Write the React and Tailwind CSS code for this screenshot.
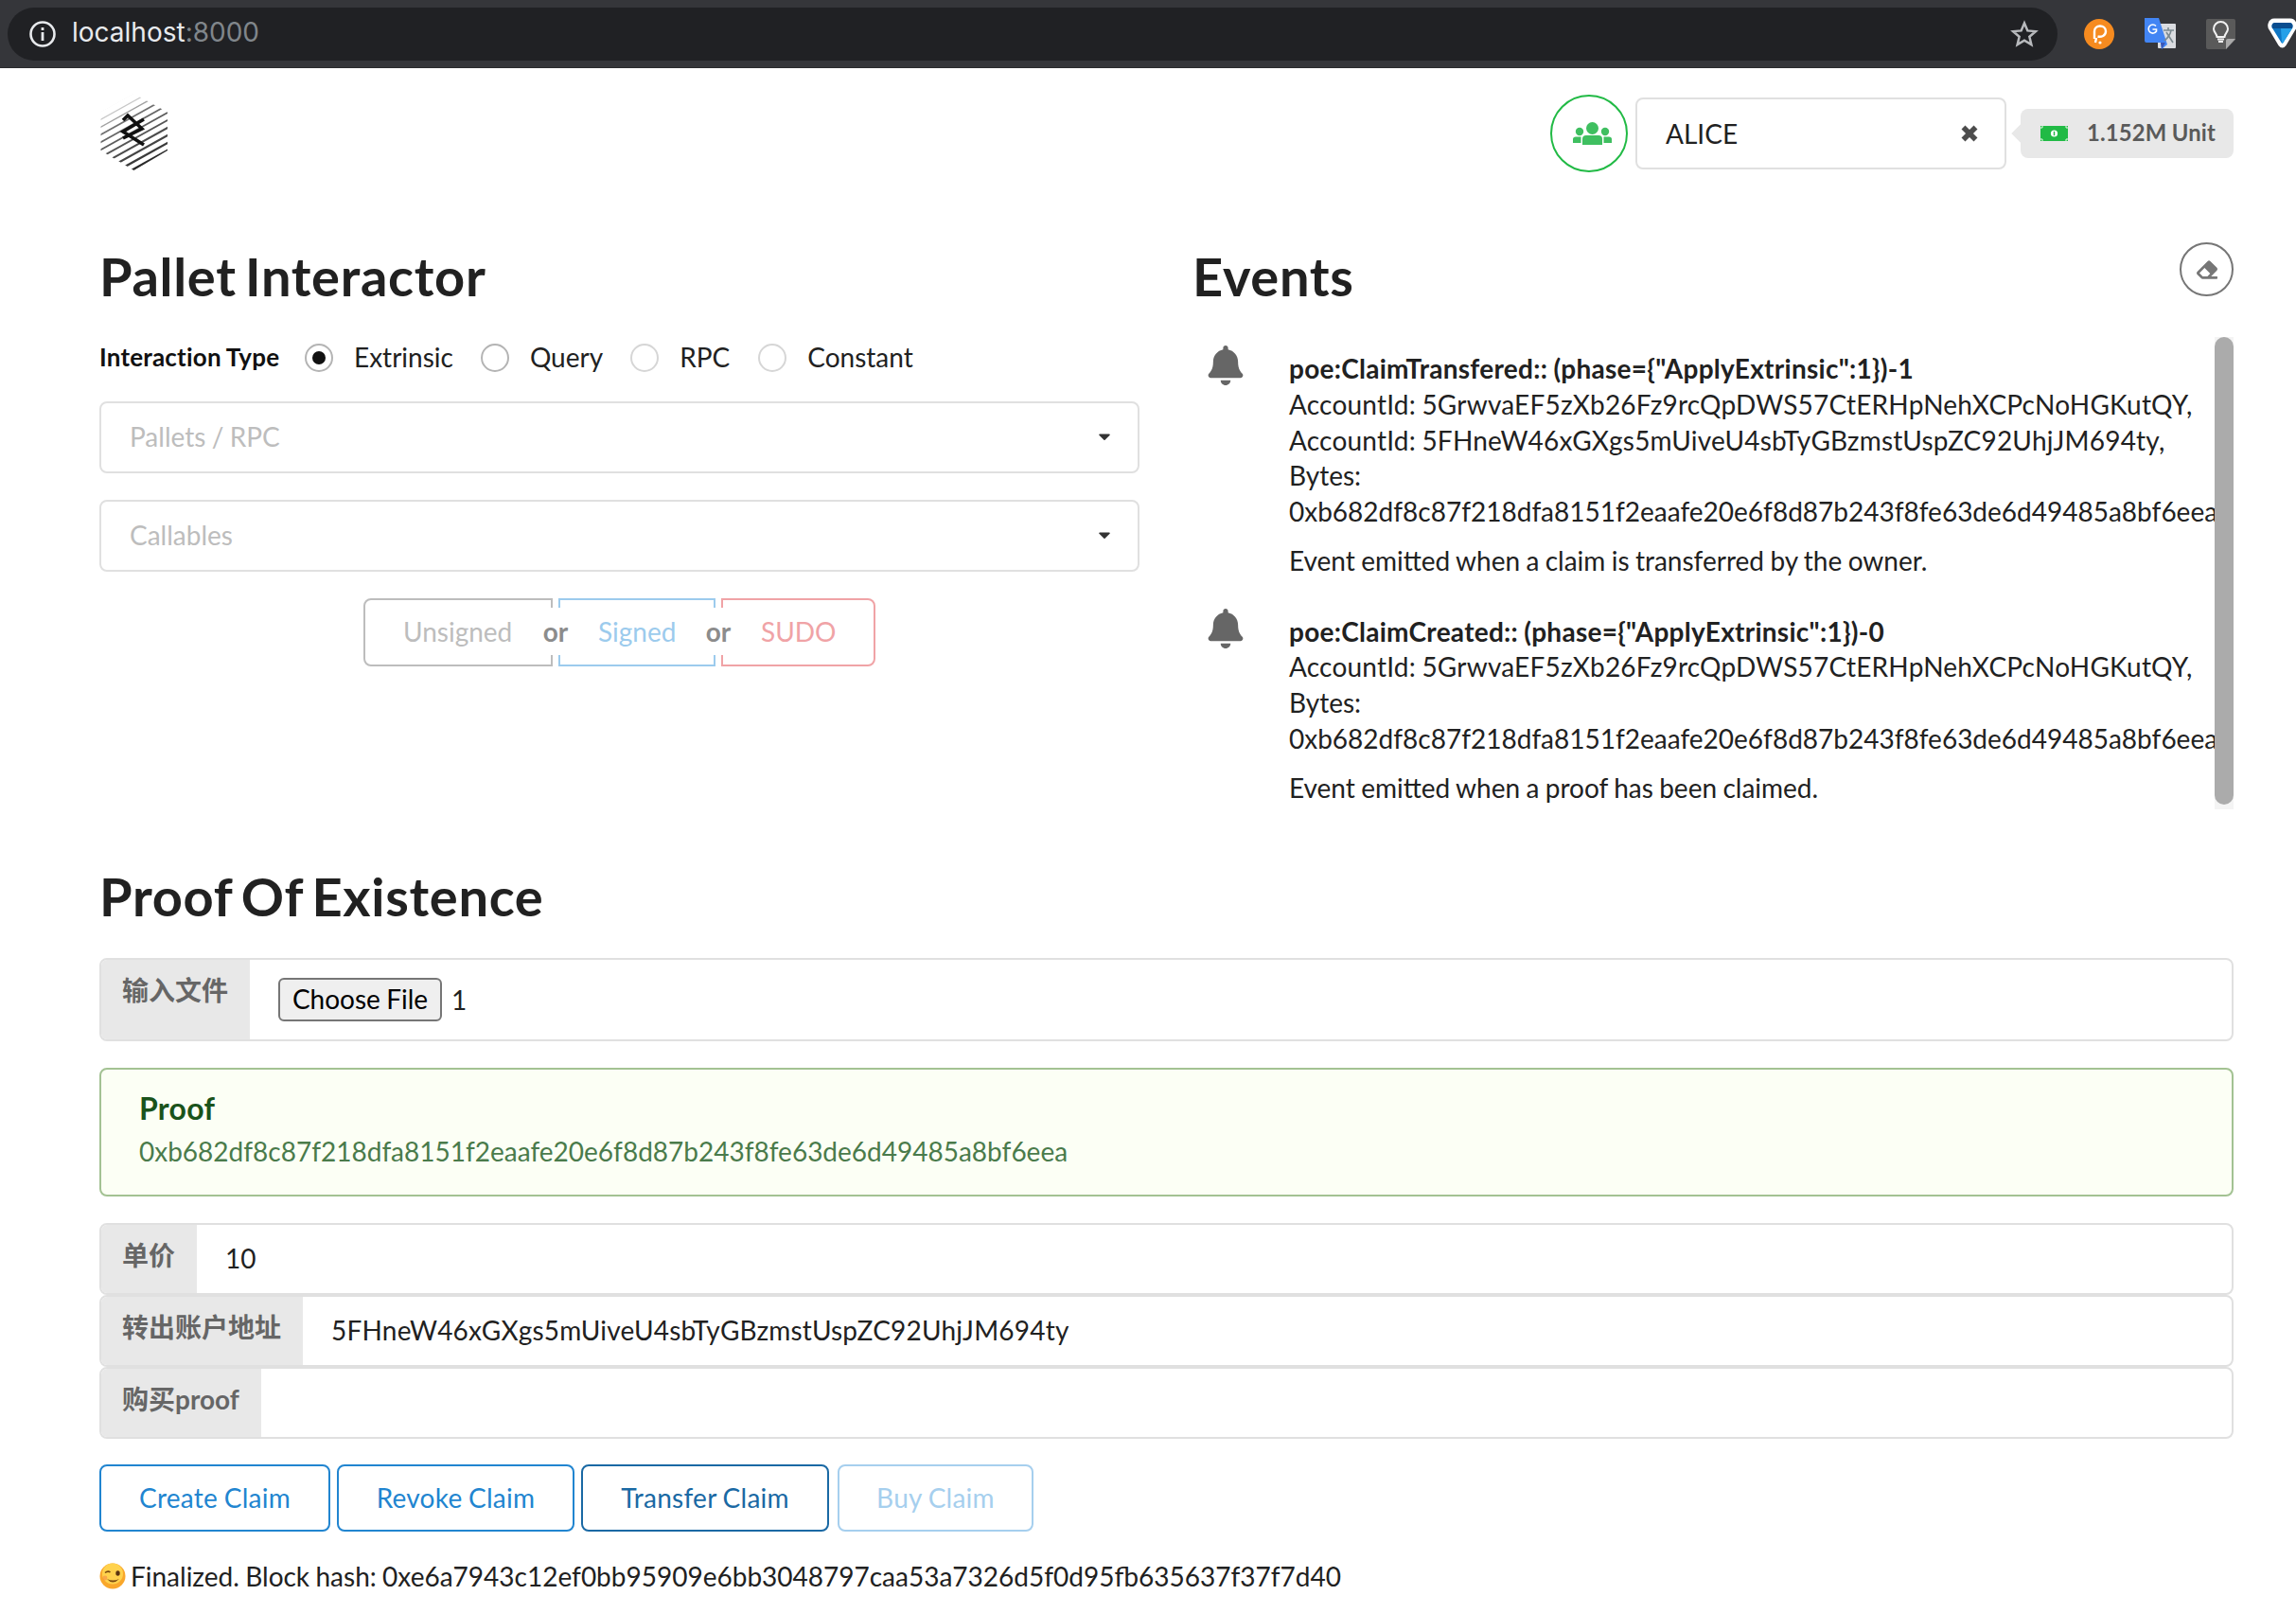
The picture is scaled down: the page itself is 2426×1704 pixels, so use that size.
import React from "react";
import { FaBell, FaEraser, FaCaretDown } from "react-icons/fa";

const logoLines = [
  [-0.5, "#dcdcdc", 1], [8, "#c8c8c8", 1.2], [16, "#a0a0a0", 1.4], [24, "#707070", 1.7], [32, "#666", 1.8], [40, "#5c5c5c", 1.8],
  [48, "#555", 1.9], [56, "#4c4c4c", 2], [64, "#444", 2.2], [72, "#3a3a3a", 2.4], [80, "#2a2a2a", 2.7], [88, "#222", 3],
];

function Logo() {
  return (
    <svg width="72" height="82" viewBox="0 0 72 82" className="ml-px -mt-[2px]">
      <defs>
        <clipPath id="hex">
          <polygon points="35.5,0 71,19.5 71,60 35.5,81 0.5,60 0.5,19.5" />
        </clipPath>
      </defs>
      <g clipPath="url(#hex)">
        {logoLines.map(([y, c, w], i) => (
          <line key={i} x1="-10" y1={y + 25} x2="80" y2={y - 25} stroke={c} strokeWidth={w} />
        ))}
      </g>
      <path d="M24 28 L29 23 L44 37 L24 47 M46 27 L24 40 L46 54" fill="none" stroke="#111" strokeWidth="3.6" />
    </svg>
  );
}

function Chrome() {
  return (
    <div className="h-[72px] bg-[#35363a] border-b border-[#2a2b2e] flex items-center pl-[8px] shrink-0 overflow-hidden">
      <div className="w-[2166px] h-[56px] rounded-full bg-[#202124] flex items-center pl-[22px] pr-[22px] shrink-0">
        <svg width="30" height="30" viewBox="0 0 30 30" className="shrink-0">
          <circle cx="15" cy="15" r="12.5" fill="none" stroke="#e8eaed" strokeWidth="2.6" />
          <rect x="13.6" y="13" width="2.8" height="9" fill="#e8eaed" />
          <rect x="13.6" y="8" width="2.8" height="3" fill="#e8eaed" />
        </svg>
        <div className="ml-[16px] pb-[3px] text-[28px] leading-none font-['Inter',sans-serif] text-[#e8eaed] whitespace-nowrap">
          localhost<span className="text-[#80868b]">:8000</span>
        </div>
        <svg width="30" height="30" viewBox="0 0 24 24" className="ml-auto -mr-[2px]">
          <path d="M12 2.8l2.7 6.3 6.8.6-5.2 4.5 1.6 6.7-5.9-3.6-5.9 3.6 1.6-6.7-5.2-4.5 6.8-.6z" fill="none" stroke="#b8babd" strokeWidth="2" />
        </svg>
      </div>
      <svg width="32" height="32" viewBox="0 0 32 32" className="ml-[28px] shrink-0">
        <circle cx="16" cy="16" r="16" fill="#f68b1f" />
        <path d="M11 21 L11 13 C11 5.5 23 6 23 13 C23 18 18 19.5 14.5 18.5 M12 25 L13 20" fill="none" stroke="#fff" strokeWidth="2.4" />
        <circle cx="17" cy="25" r="1.6" fill="#fff" />
      </svg>
      <svg width="33" height="34" viewBox="0 0 33 34" className="ml-[32px] shrink-0">
        <rect x="14" y="6" width="19" height="26" rx="1" fill="#dadce0" />
        <path d="M0 0 H15 L24 28 L18 33 L17 26 H2 Q0 26 0 24 Z" fill="#4285f4" />
        <path d="M17 26 H22 L18 33 Z" fill="#3a56b5" />
        <path d="M12 8.5 A4.5 4.5 0 1 0 12.5 14 L12.5 12 H8.5" fill="none" stroke="#fff" strokeWidth="1.6" />
        <path d="M20 13 H31 M25 10 V13 M21 24 Q27 19 28 13 M23 15 L30 26" fill="none" stroke="#7b8a90" strokeWidth="1.6" />
      </svg>
      <svg width="31" height="32" viewBox="0 0 31 32" className="ml-[32px] shrink-0">
        <path d="M2 0 H29 Q31 0 31 2 V22 L21 32 H2 Q0 32 0 30 V2 Q0 0 2 0 Z" fill="#5a5a5a" />
        <path d="M31 21 L21 32 V23 Q21 21 23 21 Z" fill="#a9a9a9" />
        <path d="M11.5 19 C11 15 8 14 8 10.5 A7.5 7.5 0 0 1 23 10.5 C23 14 20 15 19.5 19 Z M12 21.5 H19 M13 24 H18" fill="none" stroke="#f1f1f1" strokeWidth="2" />
      </svg>
      <svg width="31" height="33" viewBox="0 0 31 33" className="ml-[34px] shrink-0">
        <path d="M7 0.5 H24 Q29 0.5 30.5 6 Q31.5 10 29 13 L19.5 29 Q15.5 34 11.5 29 L2 13 Q-0.5 10 0.5 6 Q2 0.5 7 0.5 Z" fill="#fff" />
        <path d="M8 5 H23 Q26 5 26.5 8 Q27 10 25.5 11.5 L16.5 26 Q15.5 27.5 14.5 26 L5.5 11.5 Q4 10 4.5 8 Q5 5 8 5 Z" fill="#0f76c4" />
        <path d="M8 5 H23 Q26 5 26.5 8 L26 11 H5 L4.5 8 Q5 5 8 5 Z" fill="#0a4d8f" />
        <path d="M14 11 H26 L16.5 26 Q15.5 27.5 15 26 Z" fill="#26a0e8" />
      </svg>
    </div>
  );
}

function Header() {
  return (
    <div className="flex items-center justify-between pt-[28px] h-[110px]">
      <Logo />
      <div className="flex items-center">
        <div className="w-[82px] h-[82px] rounded-full border-2 border-[#21ba45] flex items-center justify-center">
          <svg width="41" height="24" viewBox="0 0 41 24" className="ml-[6px]" fill="#3fbf60">
            <circle cx="20.5" cy="6.5" r="6.5" />
            <circle cx="7" cy="10" r="4.2" />
            <circle cx="34" cy="10" r="4.2" />
            <path d="M10 24 V18 Q10 14 14 14 H27 Q31 14 31 18 V24 Z" />
            <path d="M0 22 V18 Q0 15.5 3 15.5 H8.5 V22 Z" />
            <path d="M41 22 V18 Q41 15.5 38 15.5 H32.5 V22 Z" />
          </svg>
        </div>
        <div className="ml-[8px] w-[392px] h-[76px] rounded-lg border-2 border-[#e0e0e0] flex items-center pl-[30px] pr-[27px] text-[28px] text-[#212121]">
          ALICE
          <svg width="20" height="20" viewBox="0 0 20 20" className="ml-auto">
            <path d="M3.5 3.5 L16.5 16.5 M16.5 3.5 L3.5 16.5" stroke="#4d4d4d" strokeWidth="5.6" />
          </svg>
        </div>
        <div className="relative ml-[15px] w-[225px] h-[52px] rounded-lg bg-[#e8e8e8] flex items-center pl-[21px] text-[23.8px] font-bold text-[#5a5a5a] whitespace-nowrap tracking-[0.2px]">
          <span className="absolute -left-[6px] top-[17px] w-[18px] h-[18px] rotate-45 bg-[#e8e8e8]" />
          <svg width="29" height="16" viewBox="0 0 29 16" className="shrink-0 relative">
            <rect width="29" height="16" fill="#21ba45" />
            <circle cx="14.5" cy="8" r="3.6" fill="#fff" />
            <rect x="13.8" y="5.8" width="1.4" height="4.4" fill="#21ba45" />
            <path d="M1 3V1h2M28 3V1h-2M1 13v2h2M28 13v2h-2" fill="none" stroke="#e8fbe8" strokeWidth="1" />
          </svg>
          <span className="ml-[20px]">1.152M Unit</span>
        </div>
      </div>
    </div>
  );
}

function Radio({ label, checked, stroke, mr }) {
  return (
    <div className={`flex items-center ${mr}`}>
      <span className={`w-[30px] h-[30px] rounded-full border-2 flex items-center justify-center ${stroke}`}>
        {checked && <span className="w-[14px] h-[14px] rounded-full bg-[#111]" />}
      </span>
      <span className="ml-[22px] text-[28px] text-[#212121] pb-[2px]">{label}</span>
    </div>
  );
}

function Select({ placeholder, mt }) {
  return (
    <div className={`h-[76px] rounded-lg border-2 border-[#e0e0e0] flex items-center pl-[30px] pr-[25px] text-[28px] text-[#bdbdbd] ${mt}`}>
      <span className="pb-[3px]">{placeholder}</span>
      <FaCaretDown className="ml-auto text-[#333] text-[20px] -mt-[2px]" />
    </div>
  );
}

const headingClass = "text-[56px] leading-[66px] font-bold text-[#212121] tracking-[0.7px] [word-spacing:-5px]";

function Interactor() {
  return (
    <div>
      <h1 className={`${headingClass} mt-[77px] pb-[2px]`}>Pallet Interactor</h1>
      <div className="flex items-center h-[40px] mt-[31px]">
        <span className="text-[26px] font-bold text-[#111] w-[217px] tracking-[0.2px] pb-[2px]">Interaction Type</span>
        <Radio label="Extrinsic" checked stroke="border-[#b4b4b4]" mr="mr-[29px]" />
        <Radio label="Query" stroke="border-[#b4b4b4]" mr="mr-[29px]" />
        <Radio label="RPC" stroke="border-[#d6d6d6]" mr="mr-[30px]" />
        <Radio label="Constant" stroke="border-[#d6d6d6]" mr="" />
      </div>
      <Select placeholder="Pallets / RPC" mt="mt-[26px]" />
      <Select placeholder="Callables" mt="mt-[28px]" />
      <div className="relative flex mt-[28px] ml-[279px] text-[28px] h-[72px]">
        <div className="w-[200px] border-2 border-[#bdbdbd] rounded-l-lg text-[#bdbdbd] flex items-center pl-[40px] pb-[3px]">Unsigned</div>
        <div className="ml-[6px] w-[166px] border-2 border-[#9ccbed] text-[#9ccbed] flex items-center pl-[40px] pb-[3px]">Signed</div>
        <div className="ml-[6px] w-[163px] border-2 border-[#f0a3a6] rounded-r-lg text-[#f0a3a6] flex items-center pl-[40px] pb-[3px]">SUDO</div>
        <span className="absolute left-[187px] top-[10px] w-[32px] h-[50px] bg-white flex items-center justify-center font-bold text-[#8c8c8c]">or</span>
        <span className="absolute left-[359px] top-[10px] w-[32px] h-[50px] bg-white flex items-center justify-center font-bold text-[#8c8c8c]">or</span>
      </div>
    </div>
  );
}

function EventItem({ title, lines, desc, mt }) {
  return (
    <div className={`relative pl-[101px] ${mt}`}>
      <FaBell className="absolute left-[13px] -top-[6px] text-[#666] text-[42px]" />
      <div className="text-[28px] leading-[37.75px] text-[#212121] whitespace-nowrap">
        <div className="font-bold tracking-[0.27px]">{title}</div>
        {lines.map((l) => (
          <div key={l} className={l.startsWith("AccountId") ? "tracking-[0.2px]" : ""}>{l}</div>
        ))}
      </div>
      <div className="mt-[14px] pb-[2px] text-[28px] leading-[37.75px] text-[#212121] whitespace-nowrap">{desc}</div>
    </div>
  );
}

function Events() {
  const hash = "0xb682df8c87f218dfa8151f2eaafe20e6f8d87b243f8fe63de6d49485a8bf6eea";
  return (
    <div>
      <div className="flex items-start justify-between mt-[74px]">
        <h1 className={`${headingClass} mt-[3px] pb-[2px] -ml-px`}>Events</h1>
        <div className="w-[57px] h-[57px] rounded-full border-2 border-[#767676] flex items-center justify-center">
          <FaEraser className="text-[#767676] text-[22px]" />
        </div>
      </div>
      <div className="flex mt-[29px] h-[499px]">
        <div className="w-[1079px] overflow-hidden pt-[15px]">
          <EventItem
            title={'poe:ClaimTransfered:: (phase={"ApplyExtrinsic":1})-1'}
            lines={["AccountId: 5GrwvaEF5zXb26Fz9rcQpDWS57CtERHpNehXCPcNoHGKutQY,", "AccountId: 5FHneW46xGXgs5mUiveU4sbTyGBzmstUspZC92UhjJM694ty,", "Bytes:", hash]}
            desc="Event emitted when a claim is transferred by the owner."
          />
          <EventItem
            mt="mt-[35px]"
            title={'poe:ClaimCreated:: (phase={"ApplyExtrinsic":1})-0'}
            lines={["AccountId: 5GrwvaEF5zXb26Fz9rcQpDWS57CtERHpNehXCPcNoHGKutQY,", "Bytes:", hash]}
            desc="Event emitted when a proof has been claimed."
          />
        </div>
        <div className="w-[20px] bg-[#f4f4f4] pb-[5px]">
          <div className="h-full rounded-full bg-[#ababab]" />
        </div>
      </div>
    </div>
  );
}

function LabeledRow({ label, labelW, h, value, valueClass, children, mt }) {
  return (
    <div className={`flex border-2 border-[#e0e0e0] rounded-lg overflow-hidden ${h} ${mt}`}>
      <div className={`${labelW} -ml-[2px] -my-[2px] bg-[#e8e8e8] pl-[24px] pt-[14px] text-[28px] leading-[40px] font-bold text-[#666] whitespace-nowrap shrink-0`}>
        {label}
      </div>
      <div className={`flex-1 flex items-center text-[28px] text-[#212121] ${valueClass || ""}`}>
        {value}
        {children}
      </div>
    </div>
  );
}

function ActionButton({ label, w, cls }) {
  return <div className={`${w} h-[71px] rounded-lg border-2 flex items-center justify-center pb-[2px] text-[28px] tracking-[0.25px] ${cls}`}>{label}</div>;
}

function Wink() {
  return (
    <svg width="28" height="28" viewBox="0 0 28 28" className="shrink-0">
      <circle cx="14" cy="14" r="13.5" fill="#f9a72b" />
      <circle cx="14" cy="11.5" r="11" fill="#ffd24d" />
      <path d="M6 10.5 Q9 8 11.5 10" fill="none" stroke="#7a4a10" strokeWidth="1.6" />
      <ellipse cx="19.5" cy="11" rx="2.2" ry="2.8" fill="#5a3510" />
      <path d="M8 17 Q14 24 21 17 Q14 20 8 17 Z" fill="#7a4a10" />
      <circle cx="6" cy="16" r="2.4" fill="#f58a4a" opacity="0.6" />
    </svg>
  );
}

function Proof() {
  return (
    <div>
      <h1 className={`${headingClass} mt-[59px] pb-[3px]`}>Proof Of Existence</h1>
      <LabeledRow label="输入文件" labelW="w-[159px]" h="h-[88px]" mt="mt-[29px]" valueClass="pl-[30px]">
        <span className="w-[173px] h-[46px] rounded-md border-2 border-[#767676] bg-[#efefef] flex items-center justify-center text-black pb-[2px]">Choose File</span>
        <span className="ml-[10px]">1</span>
      </LabeledRow>
      <div className="mt-[28px] h-[136px] rounded-lg border-2 border-[#a3c293] bg-[#fcfff5] pl-[40px] pt-[21px]">
        <div className="text-[32px] leading-[40px] font-bold text-[#1a531b] tracking-[0.3px]">Proof</div>
        <div className="text-[28px] leading-[40px] mt-[5px] text-[#4a7b4b]">0xb682df8c87f218dfa8151f2eaafe20e6f8d87b243f8fe63de6d49485a8bf6eea</div>
      </div>
      <LabeledRow label="单价" labelW="w-[103px]" h="h-[76px]" mt="mt-[28px]" value="10" valueClass="pl-[30px] pb-[3px]" />
      <LabeledRow label="转出账户地址" labelW="w-[215px]" h="h-[76px]" value="5FHneW46xGXgs5mUiveU4sbTyGBzmstUspZC92UhjJM694ty" valueClass="pl-[30px] pb-[3px] tracking-[0.2px]" />
      <LabeledRow label="购买proof" labelW="w-[171px]" h="h-[76px]" />
      <div className="flex mt-[27px]">
        <ActionButton label="Create Claim" w="w-[244px]" cls="border-[#2185d0] text-[#2185d0]" />
        <ActionButton label="Revoke Claim" w="w-[251px] ml-[7px]" cls="border-[#2185d0] text-[#2185d0]" />
        <ActionButton label="Transfer Claim" w="w-[262px] ml-[7px]" cls="border-[#1a69a4] text-[#1a69a4]" />
        <ActionButton label="Buy Claim" w="w-[207px] ml-[9px]" cls="border-[#a6cfee] text-[#a6cfee]" />
      </div>
      <div className="flex items-center mt-[27px] h-[40px] text-[28px] text-[#212121] whitespace-nowrap">
        <Wink />
        <span className="ml-[5px]">Finalized. Block hash: 0xe6a7943c12ef0bb95909e6bb3048797caa53a7326d5f0d95fb635637f37f7d40</span>
      </div>
    </div>
  );
}

export default function App() {
  return (
    <div className="w-[2426px] h-[1704px] overflow-hidden bg-white font-['Lato','Noto_Sans_CJK_SC',sans-serif] flex flex-col [word-spacing:-0.8px]">
      <Chrome />
      <div className="pl-[105px] pr-[66px]">
        <Header />
        <div className="grid grid-cols-2 gap-x-[57px]">
          <Interactor />
          <Events />
        </div>
        <Proof />
      </div>
    </div>
  );
}
